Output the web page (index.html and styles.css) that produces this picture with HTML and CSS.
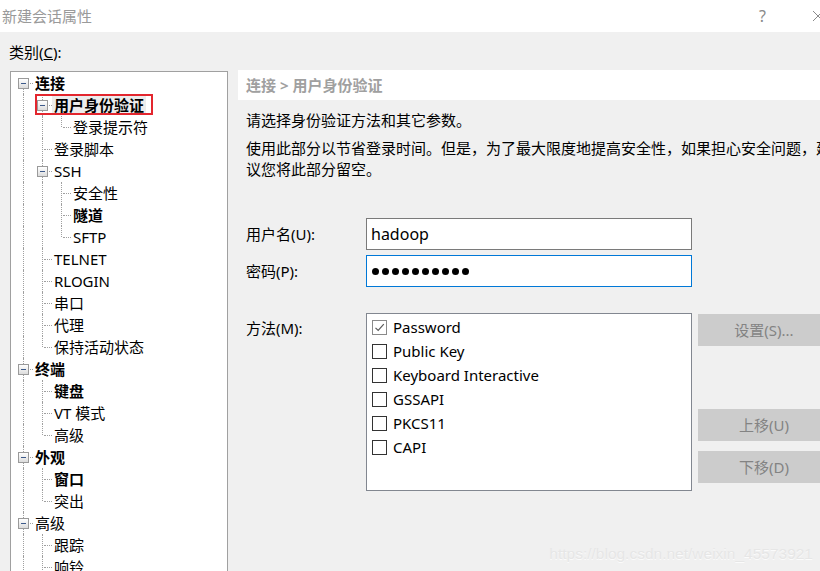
FILE: index.html
```html
<!DOCTYPE html>
<html lang="zh-CN">
<head>
<meta charset="utf-8">
<title>新建会话属性</title>
<link rel="stylesheet" href="styles.css">
</head>
<body>
<div class="window">
  <header class="titlebar">
    <span class="title">新建会话属性</span>
    <span class="help">?</span>
    <svg class="close" width="12" height="12" viewBox="0 0 12 12"><path d="M1 1 L11 11 M11 1 L1 11" stroke="#8a8a8a" stroke-width="1" fill="none"/></svg>
  </header>
  <main class="content">
    <div class="left">
      <div class="cat-label">类别(<u>C</u>):</div>
      <div class="tree">
        <div class="row"><span class="c ef"><i class="box"></i></span><span class="lbl b">连接</span></div>
        <div class="row"><span class="c v"></span><span class="c em"><i class="box"></i></span><span class="lbl b sel">用户身份验证</span><span class="mark"></span></div>
        <div class="row"><span class="c v"></span><span class="c v"></span><span class="c l"></span><span class="lbl">登录提示符</span></div>
        <div class="row"><span class="c v"></span><span class="c t"></span><span class="lbl">登录脚本</span></div>
        <div class="row"><span class="c v"></span><span class="c em"><i class="box"></i></span><span class="lbl">SSH</span></div>
        <div class="row"><span class="c v"></span><span class="c v"></span><span class="c t"></span><span class="lbl">安全性</span></div>
        <div class="row"><span class="c v"></span><span class="c v"></span><span class="c t"></span><span class="lbl b">隧道</span></div>
        <div class="row"><span class="c v"></span><span class="c v"></span><span class="c l"></span><span class="lbl">SFTP</span></div>
        <div class="row"><span class="c v"></span><span class="c t"></span><span class="lbl">TELNET</span></div>
        <div class="row"><span class="c v"></span><span class="c t"></span><span class="lbl">RLOGIN</span></div>
        <div class="row"><span class="c v"></span><span class="c t"></span><span class="lbl">串口</span></div>
        <div class="row"><span class="c v"></span><span class="c t"></span><span class="lbl">代理</span></div>
        <div class="row"><span class="c v"></span><span class="c l"></span><span class="lbl">保持活动状态</span></div>
        <div class="row"><span class="c em"><i class="box"></i></span><span class="lbl b">终端</span></div>
        <div class="row"><span class="c v"></span><span class="c t"></span><span class="lbl b">键盘</span></div>
        <div class="row"><span class="c v"></span><span class="c t"></span><span class="lbl">VT 模式</span></div>
        <div class="row"><span class="c v"></span><span class="c l"></span><span class="lbl">高级</span></div>
        <div class="row"><span class="c em"><i class="box"></i></span><span class="lbl b">外观</span></div>
        <div class="row"><span class="c v"></span><span class="c t"></span><span class="lbl b">窗口</span></div>
        <div class="row"><span class="c v"></span><span class="c l"></span><span class="lbl">突出</span></div>
        <div class="row"><span class="c em"><i class="box"></i></span><span class="lbl">高级</span></div>
        <div class="row"><span class="c v"></span><span class="c t"></span><span class="lbl">跟踪</span></div>
        <div class="row"><span class="c v"></span><span class="c t"></span><span class="lbl">响铃</span></div>
      </div>
    </div>
    <div class="right">
      <div class="crumb">连接 &gt; 用户身份验证</div>
      <p class="p1">请选择身份验证方法和其它参数。</p>
      <p class="p2">使用此部分以节省登录时间。但是，为了最大限度地提高安全性，如果担心安全问题，建议您将此部分留空。</p>
      <div class="form">
        <label class="flabel">用户名(U):</label>
        <div class="field">hadoop</div>
        <span></span>
        <label class="flabel">密码(P):</label>
        <div class="field focus"><span class="dots"><i></i><i></i><i></i><i></i><i></i><i></i><i></i><i></i><i></i><i></i></span></div>
        <span></span>
        <label class="flabel top">方法(M):</label>
        <div class="list">
          <div class="item"><span class="chk on"><svg width="13" height="13" viewBox="0 0 13 13"><path d="M2.5 6.8 L5.2 9.5 L10.8 3.2" stroke="#5a5a5a" stroke-width="1.2" fill="none"/></svg></span><span>Password</span></div>
          <div class="item"><span class="chk"></span><span>Public Key</span></div>
          <div class="item"><span class="chk"></span><span>Keyboard Interactive</span></div>
          <div class="item"><span class="chk"></span><span>GSSAPI</span></div>
          <div class="item"><span class="chk"></span><span>PKCS11</span></div>
          <div class="item"><span class="chk"></span><span>CAPI</span></div>
        </div>
        <div class="btns">
          <div class="btn">设置(S)...</div>
          <div class="btn up">上移(U)</div>
          <div class="btn">下移(D)</div>
        </div>
      </div>
    </div>
  </main>
  <div class="watermark">https://blog.csdn.net/weixin_45573921</div>
</div>
</body>
</html>
```
FILE: styles.css
```css
* { box-sizing: border-box; }
html, body { margin: 0; padding: 0; }
body {
  width: 820px;
  height: 571px;
  overflow: hidden;
  background: #f0f0f0;
  font-family: "Noto Sans", "Noto Sans CJK SC", sans-serif;
  font-size: 15px;
  color: #000;
}
.window { position: relative; width: 820px; height: 571px; overflow: hidden; }

.titlebar {
  height: 32px;
  background: #fff;
  display: flex;
  align-items: center;
}
.title {
  padding-left: 2px;
  color: #9a9a9a;
  font-size: 15px;
  line-height: 20px;
  flex: 1;
}
.help {
  color: #8a8a8a;
  font-size: 16px;
  line-height: 20px;
  margin-right: 46px;
}
.close { margin-right: -4px; flex: none; }

.content {
  display: grid;
  grid-template-columns: 218px 600px;
  column-gap: 10px;
  padding-left: 10px;
}
.cat-label {
  height: 39px;
  line-height: 20px;
  padding: 10px 0 0 0;
  margin-left: -1px;
}
.tree {
  background: #fff;
  border: 1px solid #a0a0a0;
  height: 520px;
  padding: 0 0 0 3px;
  overflow: hidden;
}
.row {
  position: relative;
  display: flex;
  height: 22px;
  align-items: center;
}
.c {
  position: relative;
  flex: none;
  width: 19px;
  height: 22px;
}
.c::before, .c::after { content: ""; position: absolute; }
.v::before, .t::before, .em::before {
  left: 9px; top: 0; bottom: 0;
  border-left: 1px dotted #a0a0a0;
}
.l::before {
  left: 9px; top: 0; height: 11px;
  border-left: 1px dotted #a0a0a0;
}
.ef::before {
  left: 9px; top: 11px; bottom: 0;
  border-left: 1px dotted #a0a0a0;
}
.t::after, .l::after, .em::after, .ef::after {
  left: 11px; top: 11px; width: 8px;
  border-top: 1px dotted #a0a0a0;
}
.box {
  position: absolute;
  z-index: 1;
  left: 4px; top: 6px;
  width: 11px; height: 11px;
  border: 1px solid #9a9a9a;
  background: linear-gradient(#ffffff, #dcdcdc);
}
.box::after {
  content: "";
  position: absolute;
  left: 2px; top: 4px;
  width: 5px; height: 1px;
  background: #3d5a8a;
}
.lbl {
  padding: 0 2px;
  line-height: 20px;
  white-space: nowrap;
}
.b { font-weight: 700; }
.sel { background: #ececec; }
.mark {
  position: absolute;
  left: 21px; top: 0;
  width: 118px; height: 21px;
  border: 2px solid #e3262e;
}

.right { padding-top: 38px; }
.crumb {
  height: 30px;
  background: #fff;
  padding-left: 8px;
  line-height: 30px;
  color: #a0a0a0;
  font-weight: 700;
}
.p1, .p2 {
  margin: 0;
  padding-left: 8px;
  line-height: 21px;
}
.p1 { margin-top: 10px; }
.p2 { margin-top: 7px; }

.form {
  margin-top: 38px;
  padding-left: 8px;
  display: grid;
  grid-template-columns: 120px 326px 132px;
  column-gap: 0;
  align-items: center;
}
.form > .btns, .form > .list { align-self: start; }
.flabel { line-height: 20px; }
.flabel.top { align-self: start; padding-top: 5px; }
.field {
  height: 32px;
  background: #fff;
  border: 1px solid #7a7a7a;
  padding-left: 4px;
  font-size: 16px;
  line-height: 28px;
  display: flex;
  align-items: center;
}
.form > :nth-child(4), .form > :nth-child(5) { margin-top: 5px; }
.field.focus { border-color: #0078d7; }
.dots { display: flex; gap: 3px; padding-left: 1px; }
.dots i { width: 7px; height: 7px; border-radius: 50%; background: #000; }
.form > :nth-child(7), .form > :nth-child(8), .form > :nth-child(9) { margin-top: 26px; }
.list {
  height: 178px;
  background: #fff;
  border: 1px solid #828790;
  padding: 1px 0 0 5px;
}
.item {
  height: 24px;
  display: flex;
  align-items: center;
  line-height: 20px;
}
.chk {
  width: 15px; height: 15px;
  border: 1px solid #333;
  background: #fff;
  margin-right: 6px;
  display: flex;
  align-items: center;
  justify-content: center;
}
.chk.on { border-color: #8a8a8a; }
.btns {
  margin-left: 6px;
  padding-top: 1px;
  display: flex;
  flex-direction: column;
}
.btn {
  height: 32px;
  width: 132px;
  background: #cccccc;
  color: #838383;
  text-align: center;
  line-height: 32px;
  margin-bottom: 10px;
}
.btn.up { margin-top: 53px; }

.watermark {
  position: absolute;
  right: 7px;
  bottom: 8px;
  font-family: "Liberation Sans", Arial, sans-serif;
  font-size: 15.5px;
  color: #e6e6e6;
  text-shadow: 0 1px 0 #fbfbfb;
}
```
